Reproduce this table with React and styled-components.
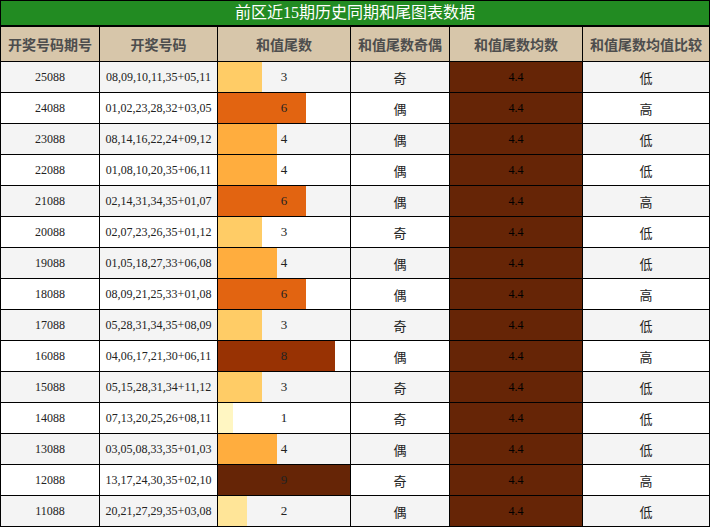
import React from "react";
import styled, { createGlobalStyle } from "styled-components";

const GlobalStyle = createGlobalStyle`
  html, body { margin: 0; padding: 0; background: #fff; }
  body { font-family: "Liberation Serif", "Noto Sans CJK SC", serif; }
`;

const Page = styled.div`
  width: 710px;
  box-sizing: border-box;
`;

const Title = styled.div`
  height: 24px;
  border: 1px solid #000;
  background: #228b22;
  color: #fff;
  font-family: "Liberation Serif", "Noto Sans CJK SC", serif;
  font-size: 16px;
  line-height: 24px;
  text-align: center;
`;

const Grid = styled.div`
  display: grid;
  grid-template-columns: 98px 117px 132px 98px 132px 126px;
  grid-template-rows: 34px;
  grid-auto-rows: 30px;
  gap: 1px;
  background: #000;
  border: 1px solid #000;
`;

const HeaderCell = styled.div`
  background: #d7c6aa;
  color: #4d4d4d;
  font-family: "Noto Sans CJK SC", sans-serif;
  font-weight: 700;
  font-size: 14px;
  display: flex;
  align-items: center;
  justify-content: center;
  white-space: nowrap;
`;

const Cell = styled.div`
  background: ${(p) => (p.$alt ? "#f4f4f4" : "#ffffff")};
  color: #222;
  font-family: "Liberation Serif", "Noto Sans CJK SC", serif;
  font-size: 12px;
  display: flex;
  align-items: center;
  justify-content: center;
  white-space: nowrap;
`;

const CjkCell = styled(Cell)`
  font-family: "Noto Sans CJK SC", sans-serif;
  font-size: 13px;
`;

const BarCell = styled(Cell)`
  background:
    linear-gradient(
      to right,
      ${(p) => p.$color} ${(p) => p.$w}px,
      transparent ${(p) => p.$w}px
    ),
    ${(p) => (p.$alt ? "#f4f4f4" : "#ffffff")};
  font-size: 13px;
`;

const AvgCell = styled(Cell)`
  background: #662506;
  color: #000;
  font-size: 12px;
`;

const barColors = {
  1: "#fff6c2",
  2: "#ffe598",
  3: "#ffcc66",
  4: "#ffad3e",
  5: "#f58a25",
  6: "#e26411",
  7: "#bf4a08",
  8: "#983203",
  9: "#662506",
};

const rows = [
  ["25088", "08,09,10,11,35+05,11", 3, "奇", "低"],
  ["24088", "01,02,23,28,32+03,05", 6, "偶", "高"],
  ["23088", "08,14,16,22,24+09,12", 4, "偶", "低"],
  ["22088", "01,08,10,20,35+06,11", 4, "偶", "低"],
  ["21088", "02,14,31,34,35+01,07", 6, "偶", "高"],
  ["20088", "02,07,23,26,35+01,12", 3, "奇", "低"],
  ["19088", "01,05,18,27,33+06,08", 4, "偶", "低"],
  ["18088", "08,09,21,25,33+01,08", 6, "偶", "高"],
  ["17088", "05,28,31,34,35+08,09", 3, "奇", "低"],
  ["16088", "04,06,17,21,30+06,11", 8, "偶", "高"],
  ["15088", "05,15,28,31,34+11,12", 3, "奇", "低"],
  ["14088", "07,13,20,25,26+08,11", 1, "奇", "低"],
  ["13088", "03,05,08,33,35+01,03", 4, "偶", "低"],
  ["12088", "13,17,24,30,35+02,10", 9, "奇", "高"],
  ["11088", "20,21,27,29,35+03,08", 2, "偶", "低"],
];

const headers = [
  "开奖号码期号",
  "开奖号码",
  "和值尾数",
  "和值尾数奇偶",
  "和值尾数均数",
  "和值尾数均值比较",
];

export default function App() {
  return (
    <Page>
      <GlobalStyle />
      <Title>前区近15期历史同期和尾图表数据</Title>
      <Grid>
        {headers.map((h) => (
          <HeaderCell key={h}>{h}</HeaderCell>
        ))}
        {rows.map(([issue, nums, tail, parity, cmp], i) => {
          const alt = i % 2 === 0;
          const w = ((tail / 9) * 132).toFixed(1);
          return (
            <React.Fragment key={issue}>
              <Cell $alt={alt}>{issue}</Cell>
              <Cell $alt={alt}>{nums}</Cell>
              <BarCell $alt={alt} $color={barColors[tail]} $w={w}>
                {tail}
              </BarCell>
              <CjkCell $alt={alt}>{parity}</CjkCell>
              <AvgCell>4.4</AvgCell>
              <CjkCell $alt={alt}>{cmp}</CjkCell>
            </React.Fragment>
          );
        })}
      </Grid>
    </Page>
  );
}
